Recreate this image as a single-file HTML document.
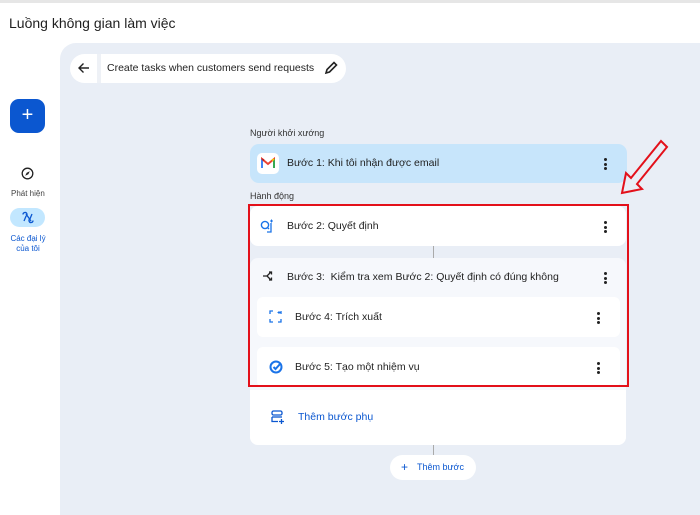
<!DOCTYPE html>
<html><head><meta charset="utf-8"><style>
*{margin:0;padding:0;box-sizing:border-box}
body{width:700px;height:515px;overflow:hidden;background:#fff;font-family:"Liberation Sans",Arial,sans-serif;position:relative;color:#1f1f1f}
.abs{position:absolute}
.t{font-size:10.5px;white-space:nowrap}
.dots{position:absolute;width:3px}
.dots i{display:block;width:3px;height:3px;border-radius:50%;background:#222;margin-bottom:1.5px}
</style></head><body>
<div class="abs" style="left:0;top:0;width:700px;height:3px;background:#e6e6e6"></div>
<div class="abs" style="left:9px;top:15px;font-size:14px;color:#1f1f1f">Luồng không gian làm việc</div>
<div class="abs" style="left:60px;top:43px;width:640px;height:472px;background:#e9eef6;border-radius:16px 0 0 0"></div>
<div class="abs" style="left:70px;top:54px;width:276px;height:29px;background:#fff;border-radius:15px"></div>
<div class="abs" style="left:97px;top:54px;width:4px;height:29px;background:#eef1f6"></div>
<svg class="abs" style="left:77px;top:61px" width="14" height="14" viewBox="0 0 14 14"><path d="M12 7H2M6.5 2.5L2 7l4.5 4.5" stroke="#222" stroke-width="1.4" fill="none"/></svg>
<div class="abs t" style="left:107px;top:62px">Create tasks when customers send requests</div>
<svg class="abs" style="left:324px;top:61px" width="14" height="14" viewBox="0 0 14 14"><path d="M2 12l1-3.5L10 1.5l2.5 2.5L5.5 11z" stroke="#222" stroke-width="1.6" fill="none"/></svg>
<div class="abs" style="left:10px;top:99px;width:35px;height:34px;background:#0b57d0;border-radius:9px;color:#fff;font-size:20px;text-align:center;line-height:32px">+</div>
<svg class="abs" style="left:21px;top:167px" width="13" height="13" viewBox="0 0 13 13"><circle cx="6.5" cy="6.5" r="5.3" stroke="#222" stroke-width="1.3" fill="none"/><path d="M8.8 4.2L7.3 7.3 4.2 8.8 5.7 5.7z" fill="#222"/></svg>
<div class="abs" style="left:11px;top:189px;font-size:8px;color:#444">Phát hiện</div>
<div class="abs" style="left:10px;top:208px;width:35px;height:19px;background:#c2e7ff;border-radius:10px"></div>
<svg class="abs" style="left:21px;top:211px" width="14" height="13" viewBox="0 0 14 13"><path d="M2 3.5a2 2 0 1 1 3 1.7L3 10M12 9.5a2 2 0 1 1-3-1.7L11 3M5 3l5 7" stroke="#0b57d0" stroke-width="1.3" fill="none"/></svg>
<div class="abs" style="left:10px;top:234px;width:36px;font-size:8px;color:#0b57d0;text-align:center;line-height:10px">Các đại lý<br>của tôi</div>
<div class="abs" style="left:250px;top:128px;font-size:9px;color:#333">Người khởi xướng</div>
<div class="abs" style="left:250px;top:144px;width:377px;height:39px;background:#c7e5fb;border-radius:9px"></div>
<div class="abs" style="left:257px;top:153px;width:22px;height:21px;background:#fff;border-radius:5px"></div>
<svg class="abs" style="left:261px;top:157px" width="14" height="12" viewBox="0 0 14 12"><path d="M1 11V2l6 5 6-5v9" stroke="#ea4335" stroke-width="2" fill="none"/><path d="M1 2v9" stroke="#4285f4" stroke-width="2"/><path d="M13 2v9" stroke="#34a853" stroke-width="2"/><path d="M1 2l2 1.5" stroke="#c5221f" stroke-width="2"/><path d="M13 2l-2 1.5" stroke="#fbbc04" stroke-width="2"/></svg>
<div class="abs t" style="left:287px;top:157px">Bước 1: Khi tôi nhận được email</div>
<div class="dots" style="left:604px;top:158px"><i></i><i></i><i></i></div>
<div class="abs" style="left:250px;top:191px;font-size:9px;color:#333">Hành động</div>
<div class="abs" style="left:250px;top:206px;width:376px;height:40px;background:#fff;border-radius:8px"></div>
<svg class="abs" style="left:260px;top:219px" width="15" height="15" viewBox="0 0 15 15"><circle cx="5" cy="6" r="3.6" stroke="#1a73e8" stroke-width="1.4" fill="none"/><path d="M7.5 8.5l1.5 1.5M11 4v9H7" stroke="#1a73e8" stroke-width="1.3" fill="none"/><path d="M11.5 0.5v3M10 2h3" stroke="#1a73e8" stroke-width="1"/></svg>
<div class="abs t" style="left:287px;top:220px">Bước 2: Quyết định</div>
<div class="dots" style="left:604px;top:221px"><i></i><i></i><i></i></div>
<div class="abs" style="left:433px;top:246px;width:1px;height:12px;background:#aaa"></div>
<div class="abs" style="left:250px;top:258px;width:376px;height:187px;background:#f6f8fc;border-radius:8px"></div>
<svg class="abs" style="left:262px;top:270px" width="13" height="13" viewBox="0 0 13 13"><path d="M1 6h4l4-4M7 2h2.5v2.5M5 6l4 4M7 10h2.5V7.5" stroke="#222" stroke-width="1.3" fill="none"/></svg>
<div class="abs t" style="left:287px;top:271px">Bước 3:&nbsp; Kiểm tra xem Bước 2: Quyết định có đúng không</div>
<div class="dots" style="left:604px;top:272px"><i></i><i></i><i></i></div>
<div class="abs" style="left:257px;top:297px;width:363px;height:40px;background:#fff;border-radius:6px"></div>
<svg class="abs" style="left:269px;top:310px" width="13" height="13" viewBox="0 0 13 13"><path d="M1 4V1h3M9 12h3V9M1 9v3h3M12 4V1" stroke="#1a73e8" stroke-width="1.3" fill="none"/><path d="M8.5 2.5h3M10 1v3" stroke="#1a73e8" stroke-width="1" fill="none"/></svg>
<div class="abs t" style="left:295px;top:311px">Bước 4: Trích xuất</div>
<div class="dots" style="left:597px;top:312px"><i></i><i></i><i></i></div>
<div class="abs" style="left:257px;top:347px;width:363px;height:40px;background:#fff;border-radius:6px"></div>
<svg class="abs" style="left:269px;top:360px" width="14" height="14" viewBox="0 0 14 14"><circle cx="7" cy="7" r="5.5" stroke="#1a73e8" stroke-width="2" fill="none"/><path d="M4.5 7l2 2 5-5.5" stroke="#1a73e8" stroke-width="2" fill="none"/></svg>
<div class="abs t" style="left:295px;top:361px">Bước 5: Tạo một nhiệm vụ</div>
<div class="dots" style="left:597px;top:362px"><i></i><i></i><i></i></div>
<div class="abs" style="left:250px;top:390px;width:376px;height:55px;background:#fff;border-radius:0 0 8px 8px"></div>
<svg class="abs" style="left:271px;top:410px" width="14" height="14" viewBox="0 0 14 14"><rect x="1" y="1" width="10" height="4" rx="1.5" stroke="#0b57d0" stroke-width="1.3" fill="none"/><path d="M1 7v4.5h6M8 11.5h5M10.5 9v5" stroke="#0b57d0" stroke-width="1.3" fill="none"/><path d="M1 7h10" stroke="#0b57d0" stroke-width="1.3"/></svg>
<div class="abs t" style="left:298px;top:411px;color:#0b57d0">Thêm bước phụ</div>
<div class="abs" style="left:433px;top:445px;width:1px;height:10px;background:#aaa"></div>
<div class="abs" style="left:390px;top:455px;width:86px;height:25px;background:#fff;border-radius:13px"></div>
<div class="abs" style="left:401px;top:460px;font-size:12px;color:#0b57d0">+</div>
<div class="abs" style="left:417px;top:462px;font-size:9px;color:#0b57d0">Thêm bước</div>
<div class="abs" style="left:248px;top:204px;width:381px;height:183px;border:2px solid #e3101a"></div>
<svg class="abs" style="left:615px;top:135px" width="60" height="62" viewBox="0 0 60 62"><path d="M7 58L11 38 16 43 46 6 52 12 22 49 27 54Z" stroke="#e3101a" stroke-width="2" fill="none"/></svg>
</body></html>
